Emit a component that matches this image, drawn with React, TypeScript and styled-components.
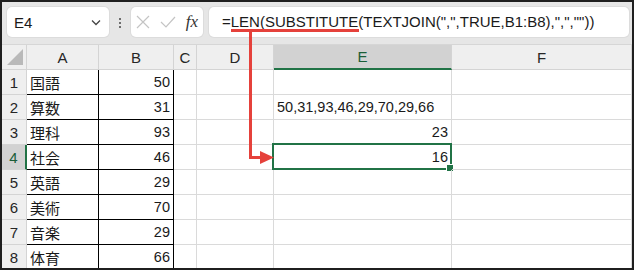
import { createGlobalStyle, styled } from "styled-components";

const GlobalStyle = createGlobalStyle`
  html, body {
    margin: 0;
    padding: 0;
    background: #ffffff;
  }
  * {
    box-sizing: border-box;
  }
`;

const Frame = styled.div`
  position: relative;
  width: 634px;
  height: 270px;
  border: 2px solid #1f1f1f;
  background: #ffffff;
  overflow: hidden;
  font-family: "Liberation Sans", "Noto Sans CJK JP", sans-serif;
  color: #1a1a1a;
`;

const Toolbar = styled.div`
  display: flex;
  align-items: flex-start;
  height: 43px;
  padding: 5px 3px 0 5px;
  background: #e6e6e6;
  border-bottom: 1px solid #d6d6d6;
`;

const Box = styled.div`
  display: flex;
  align-items: center;
  height: 30px;
  background: #ffffff;
  border-radius: 5px;
  box-shadow: 0 0 0 1px #dcdcdc;
`;

const NameBox = styled(Box)`
  width: 102px;
  padding: 0 7px;
  justify-content: space-between;
  font-size: 15px;
`;

const Dots = styled.div`
  display: flex;
  flex-direction: column;
  align-items: center;
  gap: 2px;
  width: 22px;
  margin-top: 11px;

  span {
    width: 2px;
    height: 2px;
    background: #444;
    border-radius: 1px;
  }
`;

const FuncBox = styled(Box)`
  width: 72px;
  padding: 0 4px 0 5px;
  justify-content: space-between;
`;

const Fx = styled.span`
  font-family: "Liberation Serif", serif;
  font-style: italic;
  font-size: 17px;
  color: #333;
  margin-right: 1px;
`;

const FormulaBox = styled(Box)`
  flex: 1;
  margin-left: 6px;
  padding: 0 0 1px 13px;
  font-size: 15px;
  white-space: nowrap;
  color: #1a1a1a;
`;

const Grid = styled.div`
  display: grid;
  grid-template-columns: 25px 72px 75px 23px 77px 178px 1fr;
  grid-auto-rows: 25px;
`;

const HeadCell = styled.div<{ $active?: boolean }>`
  display: flex;
  align-items: center;
  justify-content: center;
  background: ${({ $active }) => ($active ? "#d2d2d2" : "#efefef")};
  border-right: 1px solid #d4d4d4;
  border-bottom: ${({ $active }) => ($active ? "2px solid #217346" : "1px solid #d4d4d4")};
  color: ${({ $active }) => ($active ? "#1b5e38" : "#262626")};
  font-size: 15px;
`;

const Corner = styled(HeadCell)`
  position: relative;
  &::after {
    content: "";
    position: absolute;
    right: 3px;
    bottom: 4px;
    border-left: 16px solid transparent;
    border-bottom: 16px solid #b9b9b9;
  }
`;

const RowHead = styled.div<{ $active?: boolean }>`
  display: flex;
  align-items: center;
  justify-content: center;
  background: ${({ $active }) => ($active ? "#d2d2d2" : "#efefef")};
  border-right: ${({ $active }) => ($active ? "2px solid #217346" : "1px solid #d4d4d4")};
  border-bottom: 1px solid #d4d4d4;
  color: ${({ $active }) => ($active ? "#1b5e38" : "#262626")};
  font-size: 15px;
`;

const Cell = styled.div<{ $align?: "left" | "right"; $boxed?: boolean; $cjk?: boolean }>`
  position: relative;
  display: flex;
  align-items: center;
  justify-content: ${({ $align }) => ($align === "right" ? "flex-end" : "flex-start")};
  padding: 0 3px;
  border-right: 1px solid ${({ $boxed }) => ($boxed ? "#000" : "#dadada")};
  border-bottom: 1px solid ${({ $boxed }) => ($boxed ? "#000" : "#dadada")};
  font-size: ${({ $cjk }) => ($cjk ? "15px" : "14.5px")};
  white-space: nowrap;
`;

const Selection = styled.div`
  position: absolute;
  left: -2px;
  top: -2px;
  right: -1px;
  bottom: -1px;
  border: 2px solid #217346;
  pointer-events: none;

  &::after {
    content: "";
    position: absolute;
    right: -4px;
    bottom: -4px;
    width: 6px;
    height: 6px;
    background: #217346;
    border: 1px solid #fff;
  }
`;

const Overlay = styled.svg`
  position: absolute;
  left: -2px;
  top: -2px;
  pointer-events: none;
`;

const subjects = ["国語", "算数", "理科", "社会", "英語", "美術", "音楽", "体育"];
const scores = [50, 31, 93, 46, 29, 70, 29, 66];
const columns = ["A", "B", "C", "D", "E", "F"];

const eValues: Record<number, { text: string; align: "left" | "right" }> = {
  2: { text: "50,31,93,46,29,70,29,66", align: "left" },
  3: { text: "23", align: "right" },
  4: { text: "16", align: "right" },
};

export default function App() {
  return (
    <>
      <GlobalStyle />
      <Frame>
        <Toolbar>
          <NameBox>
            <span>E4</span>
            <svg width="12" height="12" viewBox="0 0 12 12">
              <path d="M2 4.5 L6 8.5 L10 4.5" fill="none" stroke="#444" strokeWidth="1.3" />
            </svg>
          </NameBox>
          <Dots>
            <span />
            <span />
            <span />
          </Dots>
          <FuncBox>
            <svg width="14" height="14" viewBox="0 0 14 14">
              <path d="M1 1 L13 13 M13 1 L1 13" stroke="#c4c4c4" strokeWidth="1.2" />
            </svg>
            <svg width="16" height="14" viewBox="0 0 16 14">
              <path d="M1 7 L6 12 L15 2" fill="none" stroke="#c4c4c4" strokeWidth="1.2" />
            </svg>
            <Fx>fx</Fx>
          </FuncBox>
          <FormulaBox>=LEN(SUBSTITUTE(TEXTJOIN(",",TRUE,B1:B8),",",""))</FormulaBox>
        </Toolbar>

        <Grid>
          <Corner />
          {columns.map((c) => (
            <HeadCell key={c} $active={c === "E"}>
              {c}
            </HeadCell>
          ))}
          {subjects.map((s, i) => {
            const row = i + 1;
            const e = eValues[row];
            return [
              <RowHead key={`h${row}`} $active={row === 4}>
                {row}
              </RowHead>,
              <Cell key={`a${row}`} $boxed $cjk>
                {s}
              </Cell>,
              <Cell key={`b${row}`} $boxed $align="right">
                {scores[i]}
              </Cell>,
              <Cell key={`c${row}`} />,
              <Cell key={`d${row}`} />,
              <Cell key={`e${row}`} $align={e?.align}>
                {e?.text}
                {row === 4 && <Selection />}
              </Cell>,
              <Cell key={`f${row}`} />,
            ];
          })}
        </Grid>

        <Overlay width="634" height="270" viewBox="0 0 634 270">
          <g fill="#e5413b">
            <rect x="231" y="29" width="128" height="3" />
            <rect x="249" y="29" width="3" height="130" />
            <rect x="249" y="156" width="12" height="3" />
            <polygon points="260,151 274,157.5 260,164" />
          </g>
        </Overlay>
      </Frame>
    </>
  );
}
